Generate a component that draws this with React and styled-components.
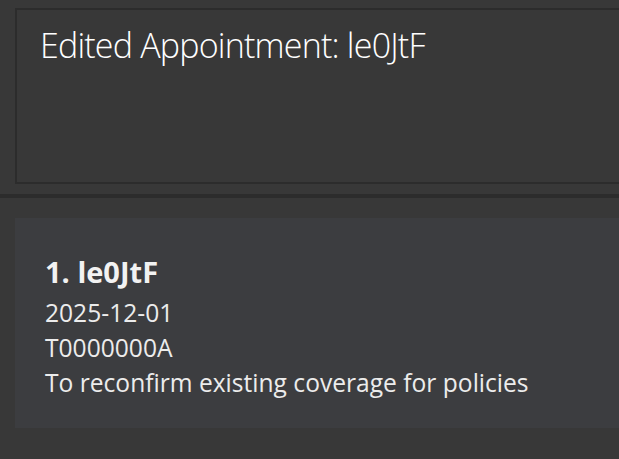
import React from 'react'
import styled, { createGlobalStyle } from 'styled-components';

const GlobalStyle = createGlobalStyle`
  html, body {
    margin: 0;
    padding: 0;
    background: #383838;
  }
  #root {
    width: 619px;
    height: 459px;
    overflow: hidden;
  }
`;

function App() {
  return (
    <Page>
      <GlobalStyle />
      <ResultDisplay>
        <ResultText>Edited Appointment: le0JtF</ResultText>
      </ResultDisplay>
      <Divider />
      <ListPane>
        <Card>
          <CardTitle>1. le0JtF</CardTitle>
          <CardLine>2025-12-01</CardLine>
          <CardLine>T0000000A</CardLine>
          <CardLine>To reconfirm existing coverage for policies</CardLine>
        </Card>
      </ListPane>
    </Page>
  );
}

const Page = styled.div`
  display: flex;
  flex-direction: column;
  width: 619px;
  height: 459px;
  background: #383838;
  font-family: "Open Sans", "Noto Sans", sans-serif;
`;

const ResultDisplay = styled.div`
  margin: 8px -20px 0 15px;
  height: 176px;
  box-sizing: border-box;
  border: 2px solid #2c2c2c;
  padding: 11px 0 0 23px;
`;

const ResultText = styled.div`
  font-weight: 300;
  font-size: 34px;
  letter-spacing: -0.8px;
  line-height: 48px;
  color: #ffffff;
  white-space: nowrap;
`;

const Divider = styled.div`
  margin-top: 10px;
  height: 4px;
  background: #2c2c2c;
`;

const ListPane = styled.div`
  padding: 20px 0 0 15px;
`;

const Card = styled.div`
  display: flex;
  flex-direction: column;
  height: 210px;
  box-sizing: border-box;
  margin-right: -20px;
  padding: 36px 0 0 30px;
  background: #3c3d40;
`;

const CardTitle = styled.div`
  font-weight: 700;
  font-size: 29px;
  line-height: 36px;
  color: #f2f2f2;
  margin-bottom: 5px;
`;

const CardLine = styled.div`
  font-size: 24.6px;
  line-height: 35px;
  color: #ececec;
  white-space: nowrap;
`;

export default App
